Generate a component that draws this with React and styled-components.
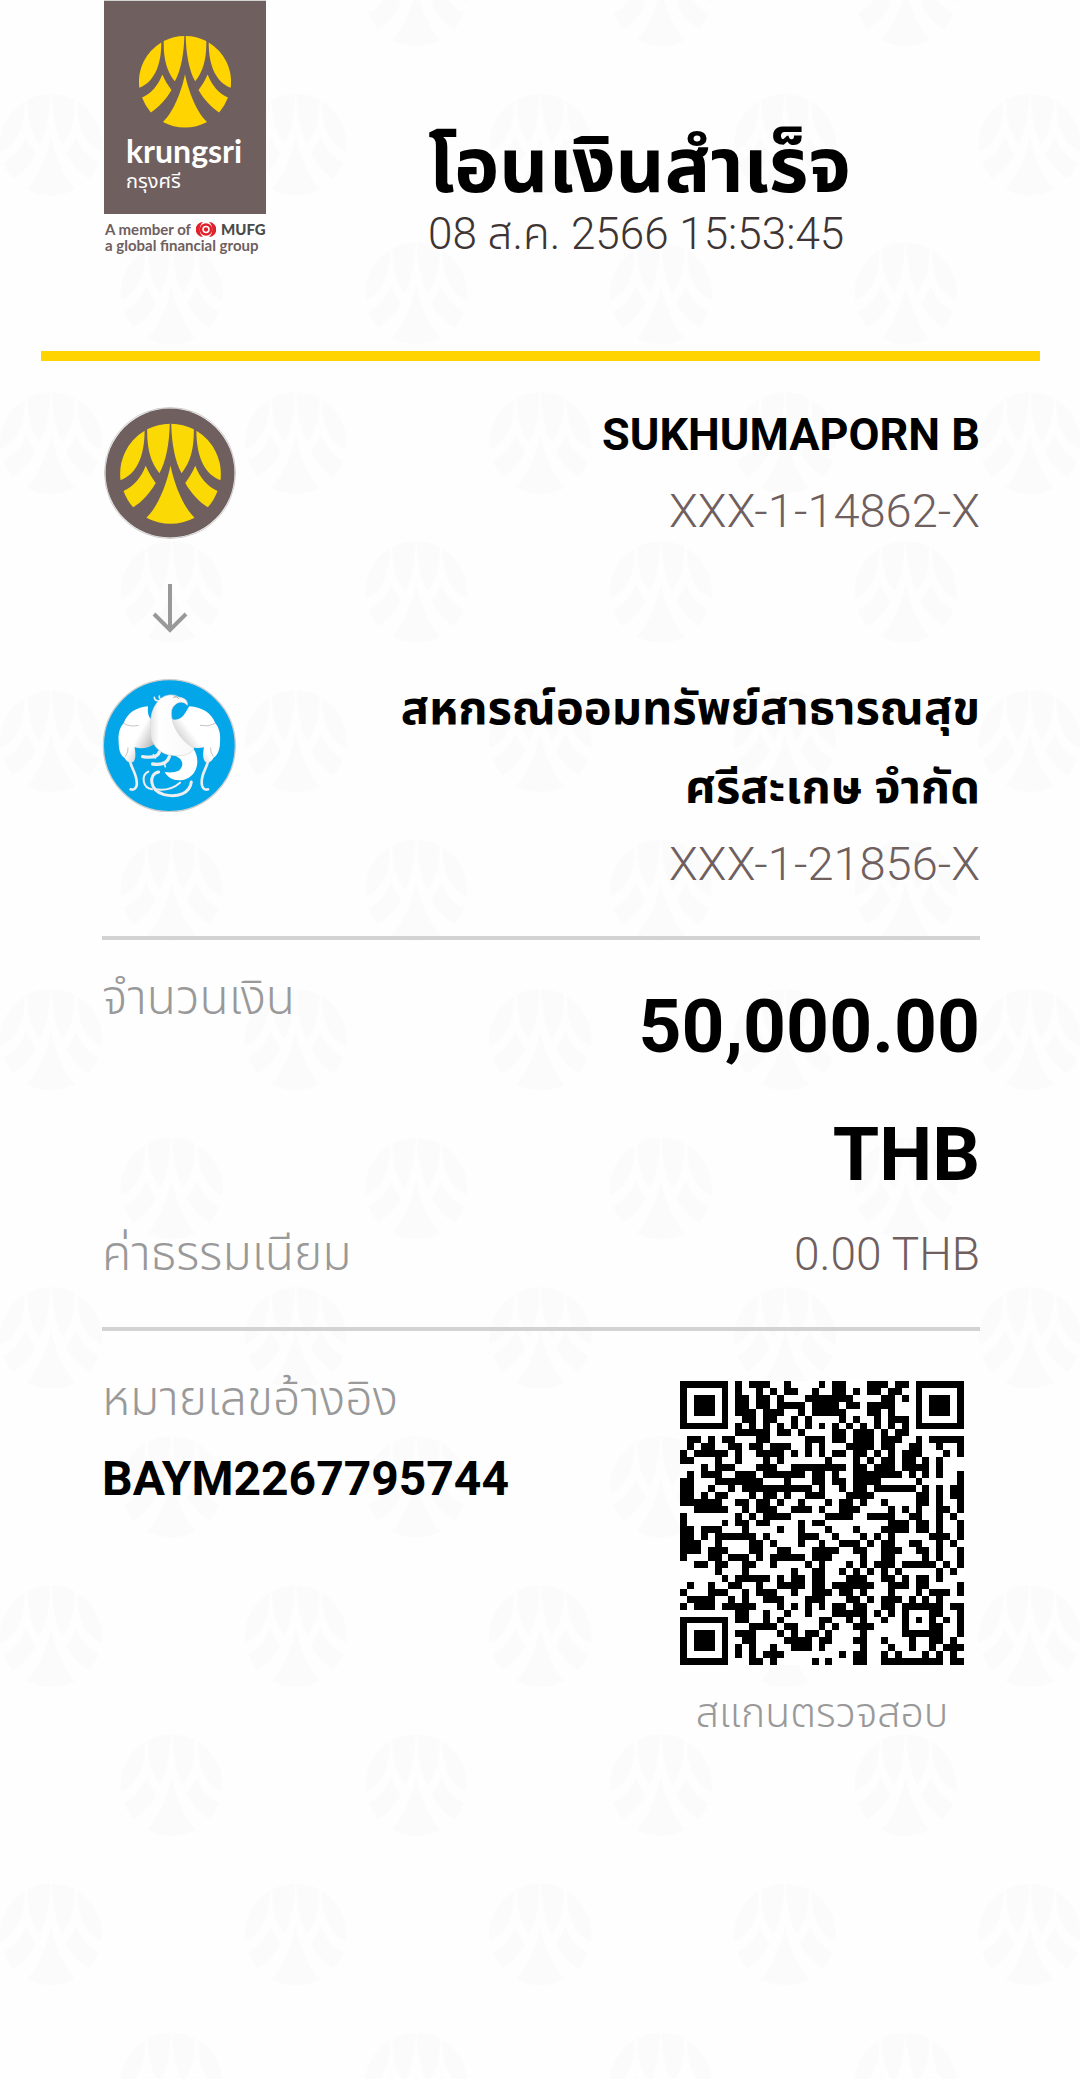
import React from 'react';
import styled, { createGlobalStyle } from 'styled-components';

const FONT = `Roboto, 'Noto Sans Thai', 'Noto Sans', sans-serif`;

const COLORS = {
  brown: '#6f5f5e',
  yellow: '#ffd400',
  line: '#d3d3d3',
  muted: '#999999',
  watermark: '#fbfbfb',
};

const GlobalStyle = createGlobalStyle`
  * {
    box-sizing: border-box;
  }

  body {
    margin: 0;
    background: #fefefe;
    font-family: ${FONT};
  }

  h1, h2, p, dl, dt, dd {
    margin: 0;
    font-weight: inherit;
  }
`;

const Slip = styled.main`
  position: relative;
  min-height: 100vh;
  color: #000;
`;

const Backdrop = styled.svg`
  position: absolute;
  inset: 0;
  width: 100%;
  height: 100%;
`;

const Content = styled.div`
  position: relative;
  display: flex;
  flex-direction: column;
`;

const Header = styled.header`
  display: flex;
  align-items: flex-start;
  gap: 162px;
  height: 351px;
  padding: 0 102px;
`;

const Brand = styled.div`
  width: 164px;
  color: ${COLORS.brown};
`;

const BrandPlate = styled.div`
  display: flex;
  flex-direction: column;
  width: 162px;
  height: 214px;
  margin-left: 2px;
  padding: 35px 22px 0;
  background: ${COLORS.brown};
  border-top: 1px solid ${COLORS.line};
  color: #fff;
`;

const BrandMark = styled.svg`
  display: block;
  width: 92px;
  height: 92px;
  margin-left: 13px;
`;

const BrandName = styled.p`
  margin-top: 6px;
  font-family: Lato, sans-serif;
  font-size: 32px;
  font-weight: 700;
  line-height: 34px;
`;

const BrandThai = styled.p`
  font-size: 20px;
  line-height: 26px;
`;

const Tagline = styled.p`
  display: flex;
  align-items: center;
  gap: 5px;
  margin-left: 3px;
  font-family: Lato, sans-serif;
  font-size: 15px;
  font-weight: 700;
  line-height: 16px;
  white-space: nowrap;

  &:first-of-type {
    margin-top: 7px;
  }

  strong {
    color: #4a4a4a;
    font-weight: 900;
  }
`;

const Heading = styled.div`
  padding-top: 113px;
  white-space: nowrap;
`;

const Title = styled.h1`
  font-size: 76px;
  font-weight: 700;
  line-height: 106px;
`;

const Timestamp = styled.p`
  color: #3d3433;
  font-size: 44px;
  font-weight: 300;
  line-height: 30px;
`;

const Accent = styled.div`
  height: 10px;
  margin: 0 40px 0 41px;
  background: ${COLORS.yellow};
`;

const Section = styled.section`
  margin: 0 100px 0 102px;
  padding: ${({ $pad }) => $pad};

  & + & {
    border-top: 4px solid ${COLORS.line};
  }
`;

const Party = styled.div`
  display: flex;
  justify-content: space-between;
`;

const PartyLogo = styled.svg`
  flex: none;
  width: 134px;
  height: 134px;
  margin-top: 10px;
`;

const PartyText = styled.div`
  max-width: 600px;
  text-align: right;
`;

const PartyName = styled.h2`
  font-size: ${({ $tall }) => ($tall ? 47 : 45)}px;
  font-weight: 700;
  line-height: ${({ $tall }) => ($tall ? 79 : 76)}px;
`;

const Account = styled.p`
  color: ${COLORS.brown};
  font-size: 47px;
  font-weight: 300;
  line-height: 76px;
`;

const Arrow = styled.svg`
  display: block;
  width: 36px;
  height: 50px;
  margin: 34px 50px 35px;
`;

const Detail = styled.div`
  display: flex;
  justify-content: space-between;
`;

const Label = styled.dt`
  color: ${COLORS.muted};
  font-size: 48px;
  font-weight: 300;
  line-height: 72px;
`;

const Amount = styled.dd`
  width: 400px;
  font-size: 75px;
  font-weight: 700;
  line-height: 128px;
  text-align: right;
`;

const Fee = styled.dd`
  color: ${COLORS.brown};
  font-size: 46px;
  font-weight: 300;
  line-height: 72px;
`;

const Reference = styled.dl`
  line-height: 80px;
`;

const ReferenceLabel = styled(Label)`
  line-height: 80px;
`;

const ReferenceNo = styled.dd`
  font-size: 48px;
  font-weight: 700;
`;

const Verify = styled.figure`
  display: flex;
  flex-direction: column;
  align-items: center;
  gap: 18px;
  margin: 22px 16px 0 0;
`;

const Qr = styled.svg`
  display: block;
  width: 284px;
  height: 284px;
  background: #fff;
`;

const Caption = styled.figcaption`
  color: ${COLORS.muted};
  font-size: 41px;
  font-weight: 300;
  line-height: 60px;
`;

const MARK_PATHS = [
  'M214 127A136 136 0 0 0 149 261C190 245 214 200 214 127Z',
  'M221 123A136 136 0 0 1 282 108C281 160 272 210 254 242C230 212 220 175 221 123Z',
  'M354 127A136 136 0 0 1 419 261C378 245 354 200 354 127Z',
  'M347 123A136 136 0 0 0 286 108C287 160 296 210 314 242C338 212 348 175 347 123Z',
  'M217 222C225 240 233 253 244 268C228 297 205 320 183 334A136 136 0 0 1 157 290C185 278 205 253 217 222Z',
  'M351 222C343 240 335 253 324 268C340 297 363 320 385 334A136 136 0 0 0 411 290C383 278 363 253 351 222Z',
  'M284 221C295 275 320 335 349 362A136 136 0 0 1 219 362C248 335 273 275 284 221Z',
];

const MARK = MARK_PATHS.join('');

// Dark runs of each row, written as "start-end" or a single column
const QR_ROWS = [
  '0-6 8 10-12 15 20 22-23 27-29 31-32 34-40',
  '0 6 8 11 13 15-16 19 22-23 25 27-28 30-31 34 40',
  '0 2-4 6 8-9 11-12 14 18-24 29-30 32 34 36-38 40',
  '0 2-4 6 8-9 11-12 14-17 19-22 24-25 27-30 34 36-38 40',
  '0 2-4 6 8-10 12-14 17 19-23 27-28 30 34 36-38 40',
  '0 6 9-10 12-13 16 18 23 25 28 30-32 34 40',
  '0-6 8 10 12 14 16 18 20 22 24 26 28 30 32 34-40',
  '8-12 14-15 17 22-23 25-27 29 31-32',
  '1-2 4 6-7 11-12 18-20 22-23 25-27 29-31 34 36-40',
  '1 3-4 7-8 10-11 13-15 18 20 24-27 29-30 33-34 37 40',
  '0 2-6 8 11-14 16 18 20 22-23 25-26 28 30 32-34 38 40',
  '0-1 5 8 12 14 21 25 27 29-30 32-33 35 37',
  '3 5-7 11-13 16-23 25-26 28-30 32-35 37',
  '1 3-5 8-10 12-15 16-17 19-20 22 25-31 33 35 37 40',
  '0-1 5-11 15 19-20 22-23 25-28 34 40',
  '0-1 4 7 9-18 20 23 25-26 28-33 35 37 39-40',
  '0-1 3 5-6 10 12-13 15 18-20 24-27 34-35 37 39-40',
  '0-5 8-9 11-12 14 17 21 23-24 26 29 34-35 37 40',
  '2-6 9 11-13 16-18 20 23-25 30 32 34 37-38 40',
  '0 8 10 12-15 21-24 27-30 33-34 37 39',
  '0 6 8-9 11-12 17 19-20 30-32 34-35 37 40',
  '0-1 3-5 9 14 17 21 25 29-32 34-35 37 40',
  '0-1 3 5-10 12 17-19 22 26 28 30 36-38 40',
  '0-2 5 10-11 13 17 20 23-25 27 29-30 33-34 37 39',
  '0-2 4-6 10-11 14-15 19-22 25-26 29-31 34-35 37 40',
  '0 4-5 7-9 11 13-17 19-21 26 29-30 35 37 40',
  '2-3 5-6 9-10 13 18 20 24 26 28-30 32-36 38 40',
  '5 9 16 19-20 23 25 27 29 31 37 39',
  '6 8-12 14 16-17 19-20 24-26 29-30 32 34-35 37',
  '1 4 7-8 11 14-17 19-20 22-27 30-32 34-35 40',
  '0 4-6 9 11-13 16 19-21 23-24 26 30 34 36-38 40',
  '1-4 7 9 12-14 18-20 24-25 27 29-31 33 35 37',
  '0 2-4 6-10 14 16 18 20 22-23 25-26 29-30 32-37 39-40',
  '8-9 12 15 18 22-26 28 30 32 36-37 40',
  '0-6 8-9 12 14 20-21 24 26 29 32 34 36 38 40',
  '0 6 10-13 15-16 20 22 25-27 32 36-37 40',
  '0 2-4 6 8-10 14 16 18-19 21 26 32-37 40',
  '0 2-4 6 9-10 15-18 20-21 25-26 29 33 36-37 39',
  '0 2-4 6 8 10 13 16-18 20 26 30 33 36 38-40',
  '0 6 8 10 12-14 23 25-26 29 31 35 37 39',
  '0-6 10-11 13 19 21 25-26 29-37 39-40',
];

const qrPath = QR_ROWS.map((row, y) =>
  row
    .split(' ')
    .map((run) => {
      const [start, end = start] = run.split('-').map(Number);
      return `M${start} ${y}H${end + 1}V${y + 1}H${start}Z`;
    })
    .join('')
).join('');

const Watermark = () => (
  <Backdrop aria-hidden="true">
    <defs>
      <pattern
        id="marks"
        y="94"
        width="244.7"
        height="298.3"
        patternUnits="userSpaceOnUse"
      >
        <g fill={COLORS.watermark}>
          <path d={MARK} transform="scale(.375) translate(-148 -108)" />
          <path
            d={MARK}
            transform="translate(120.5 149) scale(.375) translate(-148 -108)"
          />
        </g>
      </pattern>
    </defs>
    <rect width="100%" height="100%" fill="url(#marks)" />
  </Backdrop>
);

const KrungsriLogo = () => (
  <PartyLogo viewBox="0 0 134 134" role="img" aria-label="Krungsri">
    <circle cx="68" cy="66" r="65.5" fill="#fff" stroke="#ccc" />
    <circle cx="68" cy="66" r="64.5" fill={COLORS.brown} />
    <path
      d={MARK}
      fill="#fbd904"
      transform="translate(68.5 67) scale(.37) translate(-284 -244)"
    />
  </PartyLogo>
);

const KrungthaiLogo = () => (
  <PartyLogo viewBox="36 54 402 402" role="img" aria-label="Krungthai">
    <defs>
      <linearGradient id="wingLeft" x1=".2" y1=".1" x2="1" y2=".8">
        <stop offset=".5" stopColor="#fff" />
        <stop offset="1" stopColor="#a8a8a8" />
      </linearGradient>
      <linearGradient id="wingRight" x1=".8" y1=".1" x2="0" y2=".8">
        <stop offset=".5" stopColor="#fff" />
        <stop offset="1" stopColor="#a8a8a8" />
      </linearGradient>
      <linearGradient id="body" x1="0" y1="0" x2="1" y2="0">
        <stop offset="0" stopColor="#e4e4e4" />
        <stop offset=".2" stopColor="#fff" />
        <stop offset="1" stopColor="#f8f8f8" />
      </linearGradient>
      <linearGradient id="tail" x1="0" y1="0" x2=".6" y2="1">
        <stop offset="0" stopColor="#888" />
        <stop offset=".4" stopColor="#fff" />
      </linearGradient>
    </defs>
    <circle cx="238" cy="257" r="198" fill="#03a6e8" stroke="#ccc" strokeWidth="4" />
    <g fill="none" stroke="#eee" strokeLinecap="round">
      <path d="M120 304C126 330 144 346 140 376Q136 392 122 388" strokeWidth="8" />
      <path d="M354 304C348 330 330 346 336 376Q340 392 354 388" strokeWidth="8" />
      <path d="M175 335C152 346 158 384 186 388" strokeWidth="6" />
      <path d="M206 336C174 342 178 392 222 404C262 414 300 400 304 366" strokeWidth="9" />
      <path d="M196 388C224 392 252 384 270 368" strokeWidth="6" />
      <path d="M208 276C204 292 186 294 158 290M238 290C232 310 216 316 188 312" strokeWidth="10" />
      <path d="M190 284l6 10M222 308l4 12" strokeWidth="5" />
      <path d="M210 122Q194 124 193 112M216 118Q206 116 208 108" strokeWidth="5" />
    </g>
    <path
      fill="url(#wingLeft)"
      d="M174 139C142 140 110 160 101 190C88 204 84 224 86 246C86 266 90 286 104 294C108 304 118 310 130 306C138 298 137 280 134 262C156 268 176 264 194 252L186 180C176 174 172 158 174 139Z"
    />
    <path
      fill="url(#wingRight)"
      d="M298 139C334 140 366 160 376 190C388 204 392 224 390 246C390 266 384 286 370 294C366 304 356 310 346 306C338 298 338 280 342 262C318 268 292 262 274 246C260 226 252 204 246 178C278 184 284 160 298 139Z"
    />
    <path
      fill="none"
      stroke="#c4c4c4"
      strokeWidth="3"
      d="M101 190Q120 202 146 196M376 190Q356 202 330 196M106 290Q116 276 114 262M370 290Q360 276 362 262"
    />
    <path
      fill="url(#tail)"
      d="M244 284C282 292 284 318 266 332Q250 340 224 336C234 356 262 368 290 356C330 340 330 282 304 260Z"
    />
    <path
      fill="url(#body)"
      stroke="#d8d8d8"
      strokeWidth="2"
      d="M204 124C222 102 250 100 268 112C286 114 294 124 292 136C282 124 268 124 258 132C240 144 242 166 250 190C260 222 286 252 312 264C306 284 276 290 244 286C214 282 190 262 183 230C178 186 182 150 204 124Z"
    />
    <path fill="none" stroke="#999" strokeWidth="3" d="M250 112Q260 106 266 116" />
  </PartyLogo>
);

const MufgIcon = () => (
  <svg width="20" height="15" viewBox="0 0 56 42" aria-hidden="true">
    <path
      fill="#e0202b"
      d="M20 0A21 21 0 0 0 20 42A28 28 0 0 1 20 0ZM36 0A21 21 0 0 1 36 42A28 28 0 0 0 36 0Z"
    />
    <circle cx="28" cy="21" r="14" fill="none" stroke="#e0202b" strokeWidth="7" />
    <circle cx="28" cy="21" r="6" fill="#e0202b" />
  </svg>
);

const App = () => (
  <>
    <GlobalStyle />
    <Slip lang="th">
      <Watermark />
      <Content>
        <Header>
          <Brand>
            <BrandPlate>
              <BrandMark viewBox="148 108 272 272" aria-hidden="true">
                <path d={MARK} fill={COLORS.yellow} />
              </BrandMark>
              <BrandName>krungsri</BrandName>
              <BrandThai>กรุงศรี</BrandThai>
            </BrandPlate>
            <Tagline>
              A member of <MufgIcon /> <strong>MUFG</strong>
            </Tagline>
            <Tagline>a global financial group</Tagline>
          </Brand>
          <Heading>
            <Title>โอนเงินสำเร็จ</Title>
            <Timestamp>08 ส.ค. 2566 15:53:45</Timestamp>
          </Heading>
        </Header>
        <Accent />
        <Section $pad="36px 0 34px">
          <Party>
            <KrungsriLogo />
            <PartyText>
              <PartyName>SUKHUMAPORN B</PartyName>
              <Account>XXX-1-14862-X</Account>
            </PartyText>
          </Party>
          <Arrow viewBox="0 0 36 50" aria-hidden="true">
            <path
              d="M18 1V47M2 31L18 47L34 31"
              fill="none"
              stroke="#999"
              strokeWidth="4"
            />
          </Arrow>
          <Party>
            <KrungthaiLogo />
            <PartyText>
              <PartyName $tall>
                สหกรณ์ออมทรัพย์สาธารณสุข
                <br />
                ศรีสะเกษ จำกัด
              </PartyName>
              <Account>XXX-1-21856-X</Account>
            </PartyText>
          </Party>
        </Section>
        <Section as="dl" $pad="22px 0 37px">
          <Detail>
            <Label>จำนวนเงิน</Label>
            <Amount>50,000.00 THB</Amount>
          </Detail>
          <Detail>
            <Label>ค่าธรรมเนียม</Label>
            <Fee>0.00 THB</Fee>
          </Detail>
        </Section>
        <Section $pad="28px 0 0">
          <Detail>
            <Reference>
              <ReferenceLabel>หมายเลขอ้างอิง</ReferenceLabel>
              <ReferenceNo>BAYM2267795744</ReferenceNo>
            </Reference>
            <Verify>
              <Qr viewBox="0 0 41 41" shapeRendering="crispEdges" role="img" aria-label="QR">
                <path d={qrPath} />
              </Qr>
              <Caption>สแกนตรวจสอบ</Caption>
            </Verify>
          </Detail>
        </Section>
      </Content>
    </Slip>
  </>
);

export default App;
